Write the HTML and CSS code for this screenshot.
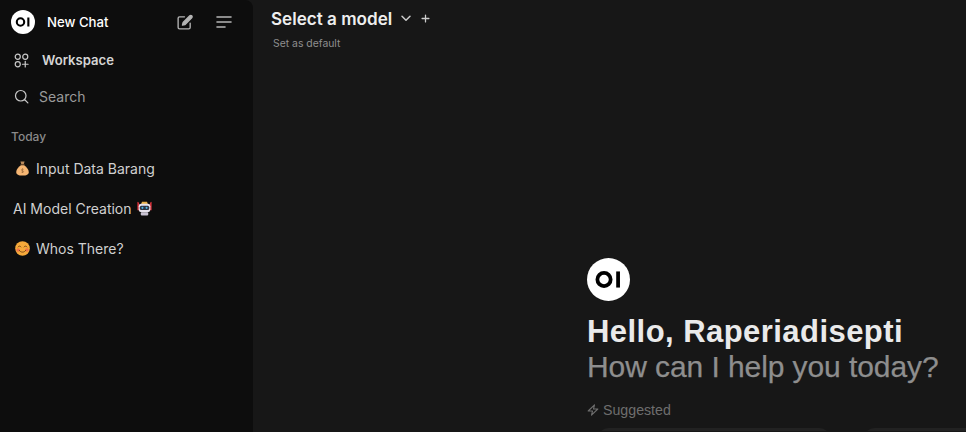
FILE: index.html
```html
<!DOCTYPE html>
<html lang="en">
<head>
  <meta charset="UTF-8" />
  <meta name="viewport" content="width=device-width, initial-scale=1.0"/>
  <title>Open WebUI</title>
  <link rel="stylesheet" href="styles.css">
</head>
<body>

  <!-- Sidebar -->
  <aside class="sidebar">
    <div class="side-top">
      <svg class="logo-small" viewBox="0 0 24 24">
        <circle cx="12" cy="12" r="12" fill="#fff"/>
        <circle cx="9.500" cy="12" r="3.700" fill="none" stroke="#000" stroke-width="2.100"/>
        <rect x="16.300" y="7.500" width="2.100" height="9" fill="#000"/>
      </svg>
      <span class="new-chat">New Chat</span>
      <svg class="top-icon edit-icon" viewBox="0 0 24 24" fill="none" stroke="currentColor" stroke-width="1.900" stroke-linecap="round" stroke-linejoin="round">
        <path d="M20 13v6a2 2 0 0 1-2 2H5a2 2 0 0 1-2-2V6a2 2 0 0 1 2-2h7"/>
        <path d="M19.500 2.600a1.900 1.900 0 0 1 2.700 2.700L12.800 14.800l-3.700.9.900-3.600z" fill="currentColor"/>
      </svg>
      <svg class="top-icon menu-icon" viewBox="0 0 16 12" fill="none" stroke="currentColor" stroke-width="1.600" stroke-linecap="round">
        <path d="M1 1h14M1 6h14M1 11h8"/>
      </svg>
    </div>

    <div class="side-link workspace">
      <svg class="link-icon" viewBox="0 0 16 16" fill="none" stroke="currentColor" stroke-width="1.300" stroke-linecap="round">
        <circle cx="4" cy="4" r="2.700"/>
        <circle cx="12" cy="4" r="2.700"/>
        <circle cx="4" cy="12" r="2.700"/>
        <path d="M12 8.900v6M9 12h6"/>
      </svg>
      <span>Workspace</span>
    </div>

    <div class="side-link search">
      <svg class="link-icon" viewBox="0 0 16 16" fill="none" stroke="currentColor" stroke-width="1.300" stroke-linecap="round">
        <circle cx="7.200" cy="7.200" r="5.600"/>
        <path d="M11.500 11.500l3.300 3.300"/>
      </svg>
      <span>Search</span>
    </div>

    <div class="group-label">Today</div>

    <div class="chat-item">
      <svg class="emoji bag" viewBox="0 0 14 16">
        <path d="M4.800 .6h4.400L8.200 3.600H5.800z" fill="#b98a5a"/>
        <rect x="4.800" y="3.400" width="4.400" height="1.200" fill="#6b4a2c"/>
        <path d="M5.300 4.600h3.400C11 6.400 13.700 8.800 13.700 11.600c0 2.800-2.700 3.900-6.700 3.900S.3 14.400.3 11.600C.3 8.800 3 6.400 5.300 4.600z" fill="#f5b673"/>
        <path d="M7 7.800v5M8.200 9c-.5-.6-2.400-.6-2.400.5 0 1.200 2.400.7 2.400 1.900 0 1-1.900 1-2.400.4" fill="none" stroke="#9a6a3a" stroke-width=".7"/>
      </svg>
      <span>Input Data Barang</span>
    </div>

    <div class="chat-item">
      <span>AI Model Creation</span>
      <svg class="emoji robot" viewBox="0 0 16 16">
        <path d="M.4 .8l1.800 1v8H.4zM15.600 .8l-1.800 1v8h1.800z" fill="#d5303a"/>
        <path d="M5.300 .8h5.400l.8 2.500H4.500z" fill="#e8b04a"/>
        <rect x="4" y="12" width="8" height="3.500" rx="1.200" fill="#c9c3d3"/>
        <rect x="1.800" y="3" width="12.400" height="9" rx="2.600" fill="#e6e2ec"/>
        <rect x="3" y="5" width="10" height="4.600" rx="1.600" fill="#2d3644"/>
        <circle cx="5.800" cy="7.300" r="1.100" fill="#4fb8ea"/>
        <circle cx="10.200" cy="7.300" r="1.100" fill="#4fb8ea"/>
      </svg>
    </div>

    <div class="chat-item">
      <svg class="emoji smile" viewBox="0 0 16 16">
        <circle cx="8" cy="8" r="7.800" fill="#f5a93a"/>
        <circle cx="3.300" cy="9.600" r="1.900" fill="#f0734a"/>
        <circle cx="12.700" cy="9.600" r="1.900" fill="#f0734a"/>
        <path d="M3.300 6.300c.7-1.200 2.300-1.200 3 0M9.700 6.300c.7-1.200 2.300-1.200 3 0M4.600 10c1.500 2.600 5.300 2.600 6.800 0" fill="none" stroke="#6a3a10" stroke-width=".9" stroke-linecap="round"/>
      </svg>
      <span>Whos There?</span>
    </div>
  </aside>

  <!-- Main area -->
  <main class="main">
    <div class="model-bar">
      <div class="model-row">
        <span class="model-name">Select a model</span>
        <svg class="chevron" viewBox="0 0 12 12" fill="none" stroke="currentColor" stroke-width="1.500" stroke-linecap="round" stroke-linejoin="round">
          <path d="M2 4.200l4 4 4-4"/>
        </svg>
        <svg class="plus" viewBox="0 0 10 10" fill="none" stroke="currentColor" stroke-width="1.400" stroke-linecap="round">
          <path d="M5 1.200v7.600M1.200 5h7.600"/>
        </svg>
      </div>
      <div class="set-default">Set as default</div>
    </div>

    <div class="hero">
      <svg class="logo-big" viewBox="0 0 24 24">
        <circle cx="12" cy="12" r="12" fill="#fff"/>
        <circle cx="9.500" cy="12" r="3.700" fill="none" stroke="#000" stroke-width="2.100"/>
        <rect x="16.300" y="7.500" width="2.100" height="9" fill="#000"/>
      </svg>
      <h1>Hello, Raperiadisepti</h1>
      <p class="subtitle">How can I help you today?</p>
      <div class="suggested">
        <svg class="bolt" viewBox="0 0 12 12" fill="none" stroke="currentColor" stroke-width="1.100" stroke-linejoin="round">
          <path d="M7.500 .8L1.200 7h4.300l-1 4.200L10.800 5H6.500z"/>
        </svg>
        <span>Suggested</span>
      </div>
      <div class="cards">
        <div class="card"></div>
        <div class="card"></div>
      </div>
    </div>
  </main>

</body>
</html>
```

FILE: styles.css
```css
html, body {
  height: 100%;
}

body {
  margin: 0;
  display: flex;
  overflow: hidden;
  background-color: #171717;
  font-family: Inter, "Liberation Sans", sans-serif;
  color: #e3e3e3;
}

.sidebar {
  width: 253px;
  flex-shrink: 0;
  background-color: #0d0d0d;
  border-top-right-radius: 8px;
  box-sizing: border-box;
  padding: 10px 0 0 11px;
}

.side-top {
  display: flex;
  align-items: center;
  height: 24px;
}

.logo-small {
  width: 24px;
  height: 24px;
}

.new-chat {
  margin-left: 12px;
  width: 129px;
  font-size: 13.2px;
  font-weight: 500;
  color: #fff;
}

.top-icon {
  color: #b5b5b5;
}

.edit-icon {
  width: 17px;
  height: 17px;
}

.menu-icon {
  width: 16px;
  height: 12px;
  margin-left: 23px;
}

.side-link {
  display: flex;
  align-items: center;
  font-size: 14px;
}

.link-icon {
  width: 15px;
  height: 15px;
  flex-shrink: 0;
  color: #c8c8c8;
}

.workspace {
  margin: 14px 0 0 3px;
  gap: 13px;
  height: 24px;
  font-size: 13.1px;
  font-weight: 600;
  color: #d5d5d5;
}

.search {
  margin: 12px 0 0 3px;
  gap: 10px;
  height: 24px;
  color: #9a9a9a;
}

.group-label {
  margin-top: 21px;
  font-size: 12px;
  font-weight: 500;
  line-height: 16px;
  color: #8a8a8a;
}

.chat-item {
  display: flex;
  align-items: center;
  gap: 6px;
  height: 40px;
  margin-left: 2px;
  font-size: 14px;
  color: #d0d0d0;
}

.group-label + .chat-item {
  margin-top: 3px;
}

.emoji {
  flex-shrink: 0;
  width: 15px;
  height: 15px;
}

.bag, .smile {
  margin-left: 2px;
}

.robot {
  margin-left: -1px;
}

.main {
  flex: 1;
  min-width: 0;
  display: flex;
  flex-direction: column;
  overflow: hidden;
}

.model-bar {
  padding: 7px 0 0 18px;
}

.model-row {
  display: flex;
  align-items: center;
  height: 22px;
}

.model-name {
  font-size: 17.1px;
  font-weight: 600;
  color: #eee;
}

.chevron {
  width: 12px;
  height: 12px;
  margin-left: 8px;
  color: #ccc;
}

.plus {
  width: 9px;
  height: 9px;
  margin-left: 9px;
  color: #ccc;
}

.set-default {
  margin: 7px 0 0 2px;
  font-size: 10.4px;
  line-height: 16px;
  color: #8f8f8f;
}

.hero {
  flex: 1;
  min-height: 0;
  overflow: hidden;
  margin: 206px 0 0 334px;
  white-space: nowrap;
}

.logo-big {
  display: block;
  width: 43px;
  height: 43px;
}

h1 {
  margin: 13px 0 0;
  font-family: "Liberation Sans", sans-serif;
  font-size: 31px;
  font-weight: 700;
  line-height: 35px;
  letter-spacing: 0.45px;
  color: #eaeaea;
}

.subtitle {
  margin: 0;
  font-family: "Liberation Sans", sans-serif;
  font-size: 30px;
  line-height: 36px;
  letter-spacing: -0.08px;
  -webkit-text-stroke: 0.25px #8e8e8e;
  color: #8e8e8e;
}

.suggested {
  display: flex;
  align-items: center;
  gap: 4px;
  margin-top: 16px;
  font-family: "Liberation Sans", sans-serif;
  font-size: 14.2px;
  line-height: 18px;
  color: #6e6e6e;
}

.bolt {
  width: 12px;
  height: 12px;
}

.cards {
  display: flex;
  gap: 32px;
  margin: 9px 0 0 10px;
  height: 3px;
  overflow: hidden;
}

.card {
  flex-shrink: 0;
  width: 234px;
  height: 60px;
  border-radius: 12px;
  background-color: #222;
}
```
